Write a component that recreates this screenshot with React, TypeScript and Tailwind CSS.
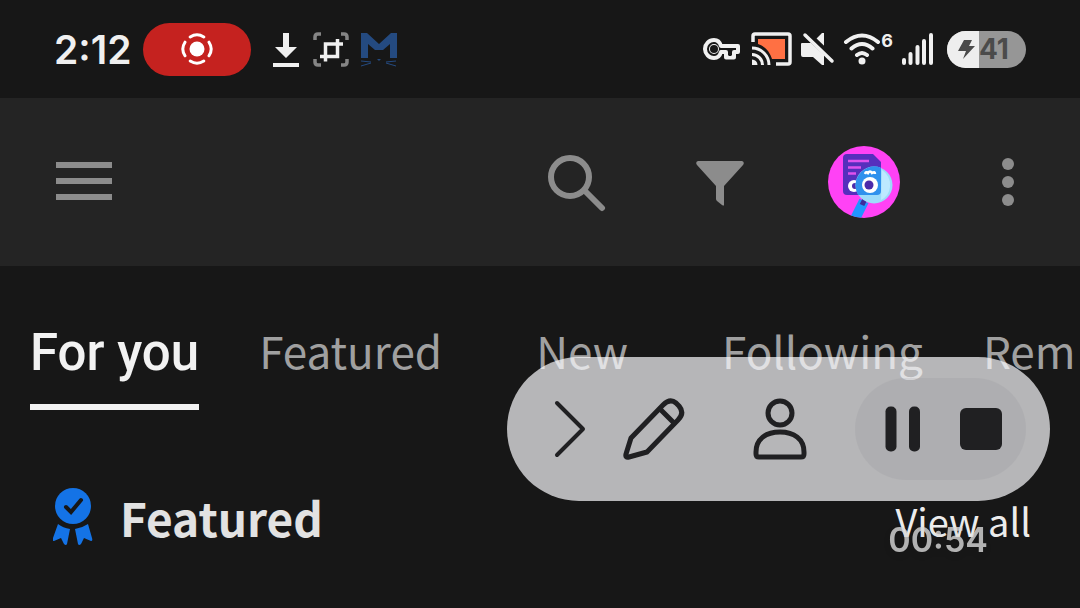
import { useState } from "react"

const tabs = ["For you", "Featured", "New", "Following", "Rem"]

function StatusBar() {
  return (
    <div className="flex h-[98px] items-center justify-between pl-[54px] pr-[54px] text-[#f0f0f0]">
      <div className="flex items-center">
        <span className="font-[Inter,sans-serif] text-[39px] leading-none font-semibold">2:12</span>
        <span className="ml-[11px] flex h-[53px] w-[108px] items-center justify-center rounded-full bg-[#c5221f]">
          <svg width="32" height="32" viewBox="0 0 32 32" fill="none" stroke="#fff" strokeWidth="3" strokeLinecap="round" aria-hidden="true">
            <circle cx="16" cy="16" r="7.5" fill="#fff" stroke="none" />
            <path d="M9.2 4C13.5 1.2 18.5 1.2 22.8 4M28 9.2C30.8 13.5 30.8 18.5 28 22.8M22.8 28C18.5 30.8 13.5 30.8 9.2 28M4 22.8C1.2 18.5 1.2 13.5 4 9.2" />
          </svg>
        </span>
        <svg className="ml-5" width="30" height="36" viewBox="0 0 30 36" fill="currentColor" aria-hidden="true">
          <path d="M12 2h6v14h8L15 27 4 16h8zM2 32h26v4H2z" />
        </svg>
        <svg className="ml-3" width="36" height="36" viewBox="0 0 36 36" fill="none" aria-hidden="true">
          <path d="M2 9V6q0-3 3-3h3M28 3h3q3 0 3 3v3M34 28v3q0 3-3 3h-3M8 34H5q-3 0-3-3v-3" stroke="#858585" strokeWidth="3.5" />
          <path d="M7 25.5h17.500V8M30 13H12.500v17.500" stroke="currentColor" strokeWidth="3.500" />
        </svg>
        <svg className="ml-3" width="36" height="38" viewBox="0 0 36 38" fill="none" aria-hidden="true">
          <path d="M0 28V3h6l12 11L30 3h6v25h-7V14l-7 6h-8l-7-6v14z" fill="#244a80" />
          <path d="M0 31l10 1M0 36l10-3M35 31l-10 1M35 36l-10-3" stroke="#244a80" strokeWidth="1" />
          <path d="M16 29h4l-2 2z" fill="#244a80" />
        </svg>
      </div>

      <div className="flex items-center">
        <svg width="38" height="24" viewBox="0 0 38 24" fill="none" stroke="currentColor" strokeWidth="4" strokeLinejoin="round" aria-hidden="true">
          <path d="M18 9C17 5.500 14.500 3 11 3a9 9 0 1 0 0 18c3.500 0 6-2.500 7-6h5v5.500h8V15h4V9z" />
          <circle cx="11" cy="12" r="4" strokeWidth="2" />
          <path d="M22 12h10M27 12v7" stroke="#171717" strokeWidth="2" />
          <circle cx="11" cy="12" r="4" fill="#171717" stroke="none" />
        </svg>
        <svg className="ml-[10px]" width="42" height="34" viewBox="0 0 42 34" fill="none" aria-hidden="true">
          <path d="M7 12V7h27v20H21C19 20 14 14 7 12" fill="#ff7043" />
          <path d="M2 10V4q0-2 2-2h33q2 0 2 2v26q0 2-2 2H25" stroke="currentColor" strokeWidth="3.500" />
          <path d="M1 16a17 17 0 0 1 17 17M1 22.500A10.500 10.500 0 0 1 11.500 33" stroke="currentColor" strokeWidth="3" />
          <path d="M1 27.500A5.500 5.500 0 0 1 6.500 33H1z" fill="currentColor" />
        </svg>
        <svg className="ml-2" width="34" height="34" viewBox="0 0 34 34" aria-hidden="true">
          <path d="M1 11h9l13 12v10h-2l-9-8H2q-2 0-2-2V12q0-1 1-1zM14 8l7-7h2v16z" fill="currentColor" />
          <path d="M7 1l28 27" stroke="#171717" strokeWidth="4" />
          <path d="M4 3l27 26" stroke="currentColor" strokeWidth="3.500" strokeLinecap="round" />
        </svg>
        <svg className="ml-2" width="38" height="32" viewBox="0 0 38 32" fill="none" stroke="currentColor" strokeWidth="4" strokeLinecap="round" aria-hidden="true">
          <path d="M3 9q16-13 32 0M8.500 15.500q10.500-9 21 0M14 22q5-4 10 0" />
          <circle cx="19" cy="28" r="3.500" fill="currentColor" stroke="none" />
        </svg>
        <span className="mb-4 font-[Inter,sans-serif] text-[18px] leading-none font-bold">6</span>
        <svg className="ml-2" width="34" height="34" viewBox="0 0 34 34" stroke="currentColor" strokeWidth="4" strokeLinecap="round" aria-hidden="true">
          <path d="M3 28v3M9.500 22v9M16.500 15v16M23 9v22M30 3v28" />
        </svg>
        <span className="ml-3 flex h-[37px] w-[79px] items-center overflow-hidden rounded-full bg-[#969696] text-[#4b4b4b]">
          <span className="flex h-full w-8 items-center justify-end bg-[#eeeeee]">
            <svg className="mr-1" width="17" height="22" viewBox="0 0 17 22" fill="currentColor" aria-hidden="true">
              <path d="M6 2h8l-3 6h6L5 21l3-8H0z" />
            </svg>
          </span>
          <span className="font-[Inter,sans-serif] text-[28px] leading-none font-bold">41</span>
        </span>
      </div>
    </div>
  )
}

function Avatar() {
  return (
    <svg width="72" height="72" viewBox="0 0 72 72" aria-hidden="true">
      <defs>
        <clipPath id="avatar-clip">
          <circle cx="36" cy="36" r="36" />
        </clipPath>
      </defs>
      <g clipPath="url(#avatar-clip)">
        <rect width="72" height="72" fill="#ff42f5" />
        <path d="M19 8h26l8 8v29q0 4-4 4H19q-4 0-4-4V12q0-4 4-4z" fill="#562fbd" />
        <path d="M20 15h21M20 21.500h13M20 27.500h8" stroke="#e052ee" strokeWidth="2.500" />
        <circle cx="26" cy="40" r="6" fill="#fff" />
        <circle cx="27" cy="40" r="3" fill="#4c2aaa" />
        <path d="M36 55l-12 24" stroke="#2196ff" strokeWidth="10" />
        <path d="M37 53l-3 6" stroke="#3d2a9b" strokeWidth="5" />
        <circle cx="46" cy="39" r="18.500" fill="#9ddcfa" />
        <path d="M54 24q9 6 8 17-1 9-9 13z" fill="#bde9ff" />
        <path d="M44 20.500q5-1 9 1.500v23q0 4-4 4H30q-5-11 0-19 5-8 14-9.500z" fill="#2f91ed" />
        <circle cx="42" cy="39" r="8" fill="#fff" />
        <circle cx="41" cy="39" r="4.500" fill="#4c2aaa" />
        <path d="M37 28q1-3 3-1 2-3 4 0 3-2 3 1" fill="none" stroke="#fff" strokeWidth="2.500" />
      </g>
    </svg>
  )
}

function AppBar() {
  const button = "flex size-[72px] items-center justify-center"

  return (
    <header className="flex h-[168px] items-center justify-between bg-[#242424] pr-9 pl-12 text-[#8c8c8c]">
      <button type="button" aria-label="Menu" className={button}>
        <svg width="56" height="40" viewBox="0 0 56 40" fill="currentColor" aria-hidden="true">
          <path d="M0 0h56v6H0zM0 16h56v6H0zM0 32h56v6H0z" />
        </svg>
      </button>
      <div className="flex items-center gap-[72px]">
        <button type="button" aria-label="Search" className={button}>
          <svg width="60" height="60" viewBox="0 0 60 60" fill="none" stroke="currentColor" strokeWidth="6" aria-hidden="true">
            <circle cx="24" cy="25" r="19" />
            <path d="M39 39l17 17" strokeLinecap="round" />
          </svg>
        </button>
        <button type="button" aria-label="Filter" className={button}>
          <svg width="48" height="48" viewBox="0 0 48 48" fill="currentColor" aria-hidden="true">
            <path d="M2 3h44q3 1 1 4L28 28v19q0 1-2 0l-5-4q-1-1-1-2V28L1 7q-2-3 1-4z" />
          </svg>
        </button>
        <button type="button" aria-label="Profile" className={button}>
          <Avatar />
        </button>
        <button type="button" aria-label="More options" className={button}>
          <svg width="12" height="48" viewBox="0 0 12 48" fill="currentColor" aria-hidden="true">
            <circle cx="6" cy="6" r="6" />
            <circle cx="6" cy="24" r="6" />
            <circle cx="6" cy="42" r="6" />
          </svg>
        </button>
      </div>
    </header>
  )
}

function RecorderBar() {
  return (
    <div className="absolute top-[357px] right-[30px] flex h-36 items-center rounded-full bg-[#fbfbfe]/70 pr-6 pl-[38px] text-[#202022]">
      <button type="button" aria-label="Collapse" className="flex h-20 w-12 items-center justify-center">
        <svg width="36" height="60" viewBox="0 0 36 60" fill="none" stroke="currentColor" strokeWidth="4" strokeLinecap="round" strokeLinejoin="round" aria-hidden="true">
          <path d="M6 4l26 26L6 56" />
        </svg>
      </button>
      <button type="button" aria-label="Draw" className="ml-5 flex size-20 items-center justify-center">
        <svg width="64" height="64" viewBox="0 0 64 64" fill="none" stroke="currentColor" strokeWidth="5" strokeLinecap="round" strokeLinejoin="round" aria-hidden="true">
          <path d="M10 41L42 8Q49 1 55 6L58 9Q64 16 57 23L26 55 8 60Q4 61 5 57z" />
          <path d="M39 12l14 14" />
        </svg>
      </button>
      <button type="button" aria-label="Show camera" className="ml-[47px] flex size-20 items-center justify-center">
        <svg width="54" height="62" viewBox="0 0 54 62" fill="none" stroke="currentColor" strokeWidth="5" strokeLinejoin="round" aria-hidden="true">
          <circle cx="27" cy="15" r="12" />
          <path d="M3 54C3 41 13 34 27 34s24 7 24 20v2q0 3-3 3H6q-3 0-3-3z" />
        </svg>
      </button>
      <div className="ml-[35px] flex h-[102px] w-[171px] items-center justify-between rounded-full bg-[#88888c]/15 pr-6 pl-6">
        <button type="button" aria-label="Pause" className="flex size-12 items-center justify-center">
          <svg width="36" height="46" viewBox="0 0 36 46" fill="currentColor" aria-hidden="true">
            <rect x="0.5" y="0.5" width="11" height="45" rx="5" />
            <rect x="24" y="0.5" width="11" height="45" rx="5" />
          </svg>
        </button>
        <button type="button" aria-label="Stop" className="flex h-12 w-[42px] items-center justify-center">
          <svg width="42" height="42" viewBox="0 0 42 42" fill="currentColor" aria-hidden="true">
            <rect width="42" height="42" rx="6" />
          </svg>
        </button>
      </div>
    </div>
  )
}

export default function App() {
  const [active, setActive] = useState("For you")

  return (
    <div className="relative min-h-screen overflow-hidden bg-[#171717] font-['Noto_Sans_CJK_SC',sans-serif]">
      <StatusBar />
      <AppBar />

      <nav className="flex gap-[60px] overflow-hidden pt-12 pl-[30px]">
        {tabs.map((tab) => (
          <button
            key={tab}
            type="button"
            onClick={() => setActive(tab)}
            className={
              active === tab
                ? "shrink-0 border-b-[6px] border-[#f2f2f2] pb-3 font-[Roboto,sans-serif] text-[51px] leading-[78px] font-medium text-[#f2f2f2]"
                : "min-w-[160px] shrink-0 border-b-[6px] border-transparent pb-[18px] text-center text-[44px] leading-[72px] text-[#a0a0a0] last:text-left"
            }
          >
            {tab}
          </button>
        ))}
      </nav>

      <section className="flex items-center justify-between pt-[70px] pr-[49px] pb-8 pl-[53px]">
        <h2 className="flex items-center gap-[25px] text-[46px] leading-[74px] font-bold text-[#e2e2e2]">
          <svg width="42" height="60" viewBox="0 0 42 60" fill="#1473e6" aria-hidden="true">
            <circle cx="20" cy="19" r="18" />
            <path d="M5 37q5 4 12 5l-3 15q-1 2-3 0l-3-6-7 3q-2 0-1-3zM35 37q-6 4-13 5l3 15q1 2 3 0l3-6 7 3q2 0 1-3z" />
            <path d="M13 20l5 5 10-12" fill="none" stroke="#171717" strokeWidth="4" strokeLinecap="round" />
          </svg>
          Featured
        </h2>
        <a href="#featured" className="pt-2 text-[38px] leading-[56px] text-[#ececec]">
          View all
        </a>
      </section>

      <RecorderBar />
      <span className="absolute top-[522px] right-[92px] font-[Inter,sans-serif] text-[34px] leading-9 font-semibold text-[#d9d9d9]/80 drop-shadow-md">
        00:54
      </span>
    </div>
  )
}
